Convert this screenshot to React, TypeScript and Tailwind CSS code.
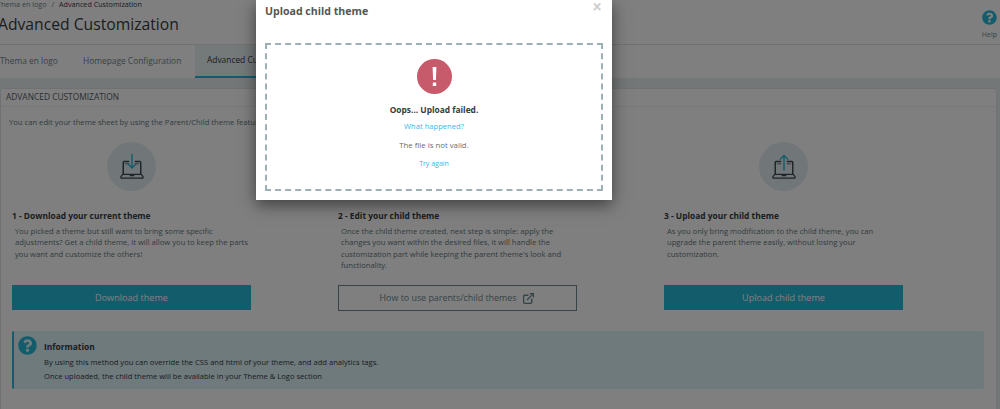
import { FaQuestionCircle } from "react-icons/fa";
import { ExternalLink } from "lucide-react";

const LaptopIcon = ({ up }: { up?: boolean }) => (
  <svg width="24" height="26" viewBox="0 0 26 28" fill="none">
    <path d="M10 8H4.5Q3.5 8 3.5 9V22M16 8H21.5Q22.5 8 22.5 9V22" stroke="#3b4b55" strokeWidth="1.6" />
    <path d="M5.5 10.5H10M16 10.5H20.5" stroke="#3b4b55" strokeWidth="0.8" />
    <path d="M1 24.5L3 22H23L25 24.5V26H1Z" stroke="#3b4b55" strokeWidth="1.3" strokeLinejoin="round" />
    <path d="M10.5 22.5H15.5V24H10.5Z" fill="#3b4b55" />
    {up ? (
      <path d="M13 18V1.5M8.5 6L13 1.5L17.5 6" stroke="#25b9d7" strokeWidth="1.5" />
    ) : (
      <path d="M13 0V15M8.5 10.5L13 15L17.5 10.5" stroke="#25b9d7" strokeWidth="1.5" />
    )}
  </svg>
);

const Step = ({ title, lines, up }: { title: string; lines: string[]; up?: boolean }) => (
  <div className="flex flex-col">
    <div className="w-[239px] flex justify-center">
      <div className="w-[49px] h-[49px] rounded-full bg-[#e3eef1] flex items-center justify-center">
        <LaptopIcon up={up} />
      </div>
    </div>
    <h4 className="mt-[18px] h-[14px] text-[8.4px] leading-[14px] font-bold text-[#363a41] whitespace-nowrap">{title}</h4>
    <div className="mt-[3px] h-[59px] pl-[3px] text-[7.65px] leading-[11.4px] text-[#5f7780] whitespace-nowrap">
      {lines.map((line) => (
        <p key={line}>{line}</p>
      ))}
    </div>
  </div>
);

const PrimaryButton = ({ label }: { label: string }) => (
  <button className="w-[239px] h-[25px] bg-[#25b9d7] text-white text-[9.1px] flex items-center justify-center">{label}</button>
);

const App = () => {
  return (
    <div className="relative w-[1000px] h-[409px] overflow-hidden bg-white font-['Open_Sans',sans-serif]">
      {/* header */}
      <div className="h-[45px] border-b border-[#dfe3e5] flex justify-between">
        <div className="-ml-[3px]">
          <div className="h-[12px] text-[7.2px] leading-[8px] text-[#6c868e] whitespace-nowrap">
            Thema en logo <span className="mx-[3px]">/</span> <span className="text-[#363a41]">Advanced Customization</span>
          </div>
          <h1 className="mt-[1px] ml-[1px] text-[15.7px] leading-[22px] text-[#363a41] whitespace-nowrap">Advanced Customization</h1>
        </div>
        <div className="mr-[3px] mt-[10px] flex flex-col items-center">
          <FaQuestionCircle className="text-[#25b9d7] text-[15px]" />
          <span className="mt-[5px] text-[7px] leading-[10px] text-[#6c868e]">Help</span>
        </div>
      </div>

      {/* tabs */}
      <div className="h-[33px] flex text-[8.4px] text-[#6c868e] -ml-[1px]">
        <div className="w-[84px] pl-[1px] flex items-center">Thema en logo</div>
        <div className="w-[112px] flex items-center">Homepage Configuration</div>
        <div className="w-[100px] px-[12px] flex items-center bg-[#e9f3f5] border-b-2 border-[#25b9d7] text-[#363a41] whitespace-nowrap">Advanced Customization</div>
      </div>

      {/* content */}
      <div className="h-[331px] bg-[#e9eeee] pt-[10px] pr-[3px]">
        <div className="h-[330px] bg-white border border-[#dfe3e5] rounded-[3px]">
          <div className="h-[18px] pl-[5px] border-b border-[#eef0f1] flex items-center text-[8.4px] font-medium text-[#555b63]">
            ADVANCED CUSTOMIZATION
          </div>
          <div className="pl-[11px] pr-[11px]">
            <p className="mt-[9px] -ml-[3px] text-[7.65px] leading-[12px] text-[#5f7780] whitespace-nowrap">
              You can edit your theme sheet by using the Parent/Child theme feature.
            </p>
            <div className="mt-[14px] grid grid-cols-[326px_326px_239px]">
              <div>
                <Step
                  title="1 - Download your current theme"
                  lines={[
                    "You picked a theme but still want to bring some specific",
                    "adjustments? Get a child theme, it will allow you to keep the parts",
                    "you want and customize the others!",
                  ]}
                />
                <PrimaryButton label="Download theme" />
              </div>
              <div>
                <Step
                  title="2 - Edit your child theme"
                  lines={[
                    "Once the child theme created, next step is simple: apply the",
                    "changes you want within the desired files, it will handle the",
                    "customization part while keeping the parent theme's look and",
                    "functionality.",
                  ]}
                />
                <button className="w-[239px] h-[26px] border border-[#6c868e] text-[#6c868e] text-[8.9px] flex items-center justify-center gap-[6px]">
                  How to use parents/child themes
                  <ExternalLink size={13} strokeWidth={2.5} />
                </button>
              </div>
              <div>
                <Step
                  up
                  title="3 - Upload your child theme"
                  lines={[
                    "As you only bring modification to the child theme, you can",
                    "upgrade the parent theme easily, without losing your",
                    "customization.",
                  ]}
                />
                <PrimaryButton label="Upload child theme" />
              </div>
            </div>
            <div className="mt-[20px] w-[972px] h-[58px] bg-[#dcf4f9] border-l-2 border-[#25b9d7] rounded-[2px] flex">
              <FaQuestionCircle className="ml-[4px] mt-[5px] text-[#25b9d7] text-[19px]" />
              <div className="ml-[7px] mt-[10px]">
                <h4 className="text-[8.4px] leading-[12px] font-bold text-[#363a41]">Information</h4>
                <p className="mt-[2px] text-[7.6px] leading-[14px] text-[#363a41] whitespace-nowrap">
                  By using this method you can override the CSS and html of your theme, and add analytics tags.
                </p>
                <p className="text-[7.6px] leading-[14px] text-[#363a41] whitespace-nowrap">
                  Once uploaded, the child theme will be available in your Theme &amp; Logo section
                </p>
              </div>
            </div>
          </div>
        </div>
      </div>

      {/* overlay + modal */}
      <div className="absolute inset-0 bg-black/50" />
      <div className="absolute left-[256px] top-0 w-[356px] h-[200px] bg-white shadow-[0_5px_15px_rgba(0,0,0,0.5)] px-[9px]">
        <div className="h-[43px] flex justify-between">
          <h3 className="mt-[3px] text-[10.6px] leading-[16px] font-bold text-[#555]">Upload child theme</h3>
          <span className="mt-[-1px] mr-[1px] text-[17px] leading-[16px] font-bold text-[#cfcfcf]">×</span>
        </div>
        <div className="h-[148px] border-2 border-dashed border-[#9db0b6] flex flex-col items-center">
          <svg className="mt-[14px]" width="35" height="35" viewBox="0 0 35 35">
            <circle cx="17.5" cy="17.5" r="17.5" fill="#c75a6b" />
            <path d="M15.6 8h3.8l-.5 13h-2.8zM15.8 23.5h3.4v3.5h-3.4z" fill="#fff" />
          </svg>
          <p className="mt-[10px] text-[8.4px] leading-[12px] font-bold text-[#363a41]">Oops... Upload failed.</p>
          <p className="mt-[4px] text-[7.6px] leading-[12px] text-[#3ab5ee]">What happened?</p>
          <p className="mt-[7px] text-[7.8px] leading-[12px] text-[#6c6c6c]">The file is not valid.</p>
          <p className="mt-[7px] text-[7px] leading-[12px] text-[#3ab5ee]">Try again</p>
        </div>
      </div>
    </div>
  );
};

export default App;
